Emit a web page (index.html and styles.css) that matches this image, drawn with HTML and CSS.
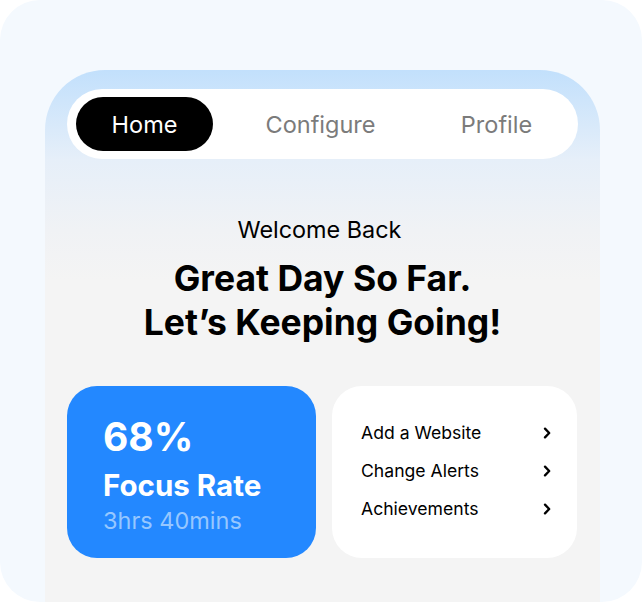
FILE: index.html
```html
<!DOCTYPE html>
<html lang="en">
<head>
<meta charset="utf-8">
<title>Focus Home</title>
<link rel="stylesheet" href="styles.css">
</head>
<body>
<div class="frame">
  <div class="phone">
    <nav class="nav">
      <span class="tab active">Home</span>
      <span class="tab">Configure</span>
      <span class="tab">Profile</span>
    </nav>
    <p class="welcome">Welcome Back</p>
    <h1 class="headline">Great Day So Far.<br>Let’s Keeping Going!</h1>
    <div class="cards">
      <div class="card focus">
        <div class="pct">68%</div>
        <div class="label">Focus Rate</div>
        <div class="time">3hrs 40mins</div>
      </div>
      <div class="card menu">
        <div class="row"><span>Add a Website</span><svg class="chev" width="8" height="12" viewBox="0 0 8 12"><path d="M2 1.6 L6.2 6 L2 10.4" fill="none" stroke="#000" stroke-width="2.3" stroke-linecap="round" stroke-linejoin="round"/></svg></div>
        <div class="row"><span>Change Alerts</span><svg class="chev" width="8" height="12" viewBox="0 0 8 12"><path d="M2 1.6 L6.2 6 L2 10.4" fill="none" stroke="#000" stroke-width="2.3" stroke-linecap="round" stroke-linejoin="round"/></svg></div>
        <div class="row"><span>Achievements</span><svg class="chev" width="8" height="12" viewBox="0 0 8 12"><path d="M2 1.6 L6.2 6 L2 10.4" fill="none" stroke="#000" stroke-width="2.3" stroke-linecap="round" stroke-linejoin="round"/></svg></div>
      </div>
    </div>
  </div>
</div>
</body>
</html>
```

FILE: styles.css
```css
* { box-sizing: border-box; }
html, body { margin: 0; padding: 0; background: #ffffff; }
body { font-family: Inter, "Noto Sans", sans-serif; color: #000; }

.frame {
  width: 642px;
  height: 602px;
  border-radius: 40px;
  background: #f4f9fe;
  overflow: hidden;
  padding: 70px 42px 0 45px;
}

.phone {
  width: 555px;
  height: 532px;
  border-radius: 60px 60px 0 0;
  background: linear-gradient(180deg, #c2e0fc 0px, #e6eff9 90px, #f0f2f5 160px, #f4f4f4 210px);
  padding: 19px 22px 0 22px;
}

.nav {
  height: 70px;
  border-radius: 35px;
  background: #ffffff;
  display: flex;
  align-items: center;
  gap: 39px;
  padding: 0 9px;
}

.tab {
  width: 137px;
  height: 54px;
  border-radius: 27px;
  display: flex;
  align-items: center;
  justify-content: center;
  font-size: 23.5px;
  color: #7b7b7b;
}

.tab.active {
  background: #000;
  color: #fff;
}

.welcome {
  margin: 61px 6px 0 0;
  text-align: center;
  font-size: 23.4px;
  line-height: 20px;
  font-weight: 400;
}

.headline {
  margin: 17px 0 0;
  text-align: center;
  font-size: 35.5px;
  line-height: 44px;
  font-weight: 700;
}

.cards {
  margin-top: 41px;
  display: grid;
  grid-template-columns: 249px 245px;
  gap: 16px;
}

.card {
  height: 172px;
  border-radius: 30px;
}

.focus {
  background: #2388ff;
  color: #fff;
  padding: 28px 0 0 36px;
}

.pct {
  font-size: 39px;
  line-height: 46px;
  font-weight: 700;
}

.label {
  margin-top: 8px;
  font-size: 29.5px;
  line-height: 34px;
  font-weight: 700;
}

.time {
  margin-top: 5px;
  font-size: 23.5px;
  line-height: 27px;
  color: #96c7ff;
}

.menu {
  background: #fff;
  padding: 28px 27px 0 29px;
}

.row {
  height: 38px;
  display: flex;
  align-items: center;
  justify-content: space-between;
  font-size: 17.6px;
  line-height: 38px;
}

.chev { display: block; margin-right: -1px; }
```
